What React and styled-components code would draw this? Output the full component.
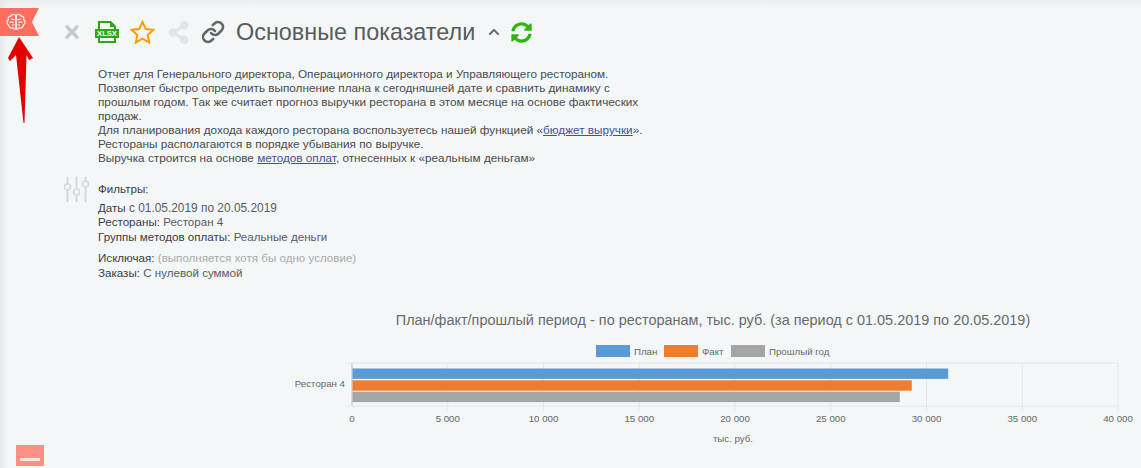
import React from "react";
import styled, { createGlobalStyle } from "styled-components";
import { FaTimes, FaShareAlt, FaSyncAlt, FaChevronUp } from "react-icons/fa";
import { LuLink } from "react-icons/lu";

const GlobalStyle = createGlobalStyle`
    html, body {
        margin: 0;
        padding: 0;
        background: #f4f7f8;
        overflow: hidden;
    }
    body {
        font-family: "Liberation Sans", Arial, sans-serif;
        color: #4a4a4a;
    }
`;

const Page = styled.div`
    position: relative;
    width: 1141px;
    height: 468px;
    box-sizing: border-box;
    padding-top: 18px;
    overflow: hidden;
    background: linear-gradient(to bottom, #eaeced 0, #f4f7f8 8px);
    &::before {
        content: "";
        position: absolute;
        left: 0;
        top: 0;
        bottom: 0;
        width: 8px;
        background: linear-gradient(to right, #e6e8e9, rgba(244, 247, 248, 0));
    }
`;

const Ribbon = styled.div`
    position: absolute;
    left: 0;
    top: 8px;
    width: 39px;
    height: 28px;
    background: #ff6e60;
    clip-path: polygon(0 0, 100% 0, 82% 50%, 100% 100%, 0 100%);
    display: flex;
    align-items: center;
    padding-left: 6px;
    box-sizing: border-box;
`;

const Arrow = styled.svg`
    position: absolute;
    left: 0;
    top: 30px;
`;

const MinusButton = styled.div`
    position: absolute;
    left: 16px;
    top: 445px;
    width: 28px;
    height: 21px;
    background: #ff8f85;
    display: flex;
    justify-content: center;
    align-items: flex-end;
    padding-bottom: 5px;
    box-sizing: border-box;
    &::after {
        content: "";
        width: 20px;
        height: 3px;
        background: #f7e6e3;
    }
`;

const Toolbar = styled.div`
    display: flex;
    align-items: center;
    height: 28px;
    margin-left: 64px;
`;

const IconSlot = styled.span`
    display: flex;
    align-items: center;
    justify-content: center;
    width: ${(p) => p.$w}px;
    margin-right: ${(p) => p.$gap || 0}px;
    font-size: ${(p) => p.$size}px;
    color: ${(p) => p.$color};
`;

const Title = styled.h1`
    margin: 0 13px 0 0;
    font-size: 23.4px;
    font-weight: 400;
    line-height: 28px;
    color: #5a5a5a;
    white-space: nowrap;
`;

const Description = styled.div`
    margin: 21px 0 0 98px;
    width: 560px;
    font-size: 11.75px;
    line-height: 14px;
    color: #4a4a4a;
    a {
        color: #45509b;
        text-decoration: underline;
    }
`;

const Line = styled.div`
    white-space: nowrap;
`;

const Filters = styled.div`
    display: flex;
    margin: 12px 0 0 64px;
`;

const SlidersIcon = styled.svg`
    flex: none;
    margin-right: 9px;
`;

const FilterText = styled.div`
    font-size: 11.6px;
    line-height: 14.5px;
    padding-top: 5px;
`;

const FilterGroup = styled.div`
    margin-top: ${(p) => p.$top}px;
`;

const Label = styled.span`
    color: #3c3c3c;
`;

const Value = styled.span`
    color: #5a5a5a;
    font-size: ${(p) => p.$size || 11.6}px;
`;

const Muted = styled.span`
    color: #aaa;
`;

const ChartWrap = styled.div`
    margin-top: 31px;
`;

const ChartTitle = styled.div`
    margin-left: 285px;
    width: 856px;
    text-align: center;
    font-size: 14.45px;
    line-height: 18px;
    color: #6a6a6a;
    white-space: nowrap;
`;

const ChartSvg = styled.svg`
    display: block;
    margin-top: 7px;
    text {
        font-family: "Liberation Sans", Arial, sans-serif;
        font-size: 9.7px;
        fill: #666;
    }
`;

const ticks = [0, 5000, 10000, 15000, 20000, 25000, 30000, 35000, 40000];
const plotLeft = 352;
const plotWidth = 766;
const toX = (v) => plotLeft + (v / 40000) * plotWidth;
const fmt = (v) => String(v).replace(/\B(?=(\d{3})+$)/g, " ");

const bars = [
    { color: "#5b9bd5", y: 368.5, end: 947.7 },
    { color: "#ed7d31", y: 380.3, end: 911.3 },
    { color: "#a5a5a5", y: 391.7, end: 899.3 },
];

const legend = [
    { color: "#5b9bd5", x: 596, label: "План" },
    { color: "#ed7d31", x: 664, label: "Факт" },
    { color: "#a5a5a5", x: 731, label: "Прошлый год" },
];

// the viewBox keeps page coordinates, so the numbers below read off the screenshot
const Chart = () => (
    <ChartSvg width="1141" height="110" viewBox="0 336 1141 110">
        {legend.map((l) => (
            <g key={l.label}>
                <rect x={l.x} y="345" width="34" height="12" fill={l.color} />
                <text x={l.x + 38} y="354.5">{l.label}</text>
            </g>
        ))}
        {ticks.map((t) => (
            <g key={t}>
                <line x1={toX(t)} x2={toX(t)} y1="363" y2={t === 0 ? 406 : 411} stroke={t === 0 ? "#bdbfc0" : "#e4e7e8"} />
                <text x={toX(t)} y="421.5" textAnchor="middle">{fmt(t)}</text>
            </g>
        ))}
        <line x1="345" x2="1118" y1="363" y2="363" stroke="#e4e7e8" />
        <line x1="345" x2="1118" y1="406" y2="406" stroke="#e4e7e8" />
        {bars.map((b) => (
            <rect key={b.color} x={plotLeft + 0.5} y={b.y} width={b.end - plotLeft} height="10.4" fill={b.color} />
        ))}
        <text x="345" y="387" textAnchor="end">Ресторан 4</text>
        <text x="733" y="442" textAnchor="middle">тыс. руб.</text>
    </ChartSvg>
);

const XlsxIcon = () => (
    <svg width="24" height="24" viewBox="0 0 24 24">
        <path d="M3 1h13l5 5v17H3z" fill="#2ea80f" />
        <path d="M5 3h10v4h4v14H5z" fill="#f4f7f8" />
        <rect x="0" y="9" width="24" height="9" fill="#2ea80f" />
        <text x="12" y="16.2" textAnchor="middle" fontFamily="Liberation Sans" fontWeight="700" fontSize="7.6" fill="#fff">XLSX</text>
    </svg>
);

const StarIcon = () => (
    <svg width="25" height="24" viewBox="0 0 25 24" fill="none" stroke="#f90" strokeWidth="1.9" strokeLinejoin="miter">
        <path d="M12.5 1.8l3.2 7.2 7.7.8-5.8 5.2 1.7 7.6-6.8-4-6.8 4 1.7-7.6L1.6 9.8l7.7-.8z" />
    </svg>
);

const BrainIcon = () => (
    <svg width="20" height="18" viewBox="0 0 20 18" fill="none" stroke="#fff" strokeWidth="1.3" opacity="0.9">
        <path d="M10 2.5C9 .8 5.8 .8 5 3 2.8 3 1.6 5 2.4 6.8 .4 8 .6 11 2.6 11.8 2.6 14.4 5 15.6 6.8 14.8 7.8 16.6 9.4 16.4 10 15.4z" />
        <path d="M10 2.5C11 .8 14.2 .8 15 3 17.2 3 18.4 5 17.6 6.8 19.6 8 19.4 11 17.4 11.8 17.4 14.4 15 15.6 13.2 14.8 12.2 16.6 10.6 16.4 10 15.4z" />
        <path d="M5.5 5.5c1 1.4 2.5 1.4 3 .6M3.5 9.5c1.4-.8 3-.6 4 .4M6 13c.4-1 1.4-1.4 2.4-1.2M14.5 5.5c-1 1.4-2.5 1.4-3 .6M16.5 9.5c-1.4-.8-3-.6-4 .4M14 13c-.4-1-1.4-1.4-2.4-1.2" strokeWidth="1.1" />
    </svg>
);

const Sliders = () => (
    <SlidersIcon width="25" height="25" viewBox="0 0 25 25" fill="none" stroke="#d6d8d9" strokeWidth="2">
        <path d="M3.5 0v7M3.5 13v12M12.5 0v12M12.5 18v7M21.5 0v4M21.5 10v15" />
        <circle cx="3.5" cy="10" r="3" strokeWidth="1.6" />
        <circle cx="12.5" cy="15" r="3" strokeWidth="1.6" />
        <circle cx="21.5" cy="7" r="3" strokeWidth="1.6" />
    </SlidersIcon>
);

const App = () => {
    return (
        <Page>
            <GlobalStyle />
            <Ribbon><BrainIcon /></Ribbon>
            <Arrow width="40" height="96" viewBox="0 30 40 96">
                <path d="M19 37L33 58 29 60 26.5 55 24.5 123 23.5 123 16 55 10 61 8 58z" fill="#e30000" />
            </Arrow>
            <MinusButton />

            <Toolbar>
                <IconSlot $w={16} $gap={15} $size={20} $color="#c8cacb"><FaTimes /></IconSlot>
                <IconSlot $w={24} $gap={11} $size={24} $color="#2ea80f"><XlsxIcon /></IconSlot>
                <IconSlot $w={25} $gap={12} $size={25} $color="#f90"><StarIcon /></IconSlot>
                <IconSlot $w={23} $gap={11} $size={23} $color="#e2e4e5"><FaShareAlt /></IconSlot>
                <IconSlot $w={24} $gap={11} $size={28} $color="#666"><LuLink strokeWidth={2.6} /></IconSlot>
                <Title>Основные показатели</Title>
                <IconSlot $w={12} $gap={10} $size={12} $color="#666"><FaChevronUp /></IconSlot>
                <IconSlot $w={22} $size={21} $color="#2eb40f"><FaSyncAlt /></IconSlot>
            </Toolbar>

            <Description>
                <Line>Отчет для Генерального директора, Операционного директора и Управляющего рестораном.</Line>
                <Line>Позволяет быстро определить выполнение плана к сегодняшней дате и сравнить динамику с</Line>
                <Line>прошлым годом. Так же считает прогноз выручки ресторана в этом месяце на основе фактических</Line>
                <Line>продаж.</Line>
                <Line>Для планирования дохода каждого ресторана воспользуетесь нашей функцией «<a href="#b">бюджет выручки</a>».</Line>
                <Line>Рестораны располагаются в порядке убывания по выручке.</Line>
                <Line>Выручка строится на основе <a href="#m">методов оплат</a>, отнесенных к «реальным деньгам»</Line>
            </Description>

            <Filters>
                <Sliders />
                <FilterText>
                    <Label>Фильтры:</Label>
                    <FilterGroup $top={4}>
                        <Line><Label>Даты</Label> <Value $size={11.9}>с 01.05.2019 по 20.05.2019</Value></Line>
                        <Line><Label>Рестораны:</Label> <Value>Ресторан 4</Value></Line>
                        <Line><Label>Группы методов оплаты:</Label> <Value>Реальные деньги</Value></Line>
                    </FilterGroup>
                    <FilterGroup $top={7}>
                        <Line><Label>Исключая:</Label> <Muted>(выполняется хотя бы одно условие)</Muted></Line>
                        <Line><Label>Заказы:</Label> <Value>С нулевой суммой</Value></Line>
                    </FilterGroup>
                </FilterText>
            </Filters>

            <ChartWrap>
                <ChartTitle>План/факт/прошлый период - по ресторанам, тыс. руб. (за период с 01.05.2019 по 20.05.2019)</ChartTitle>
                <Chart />
            </ChartWrap>
        </Page>
    );
};

export default App;
